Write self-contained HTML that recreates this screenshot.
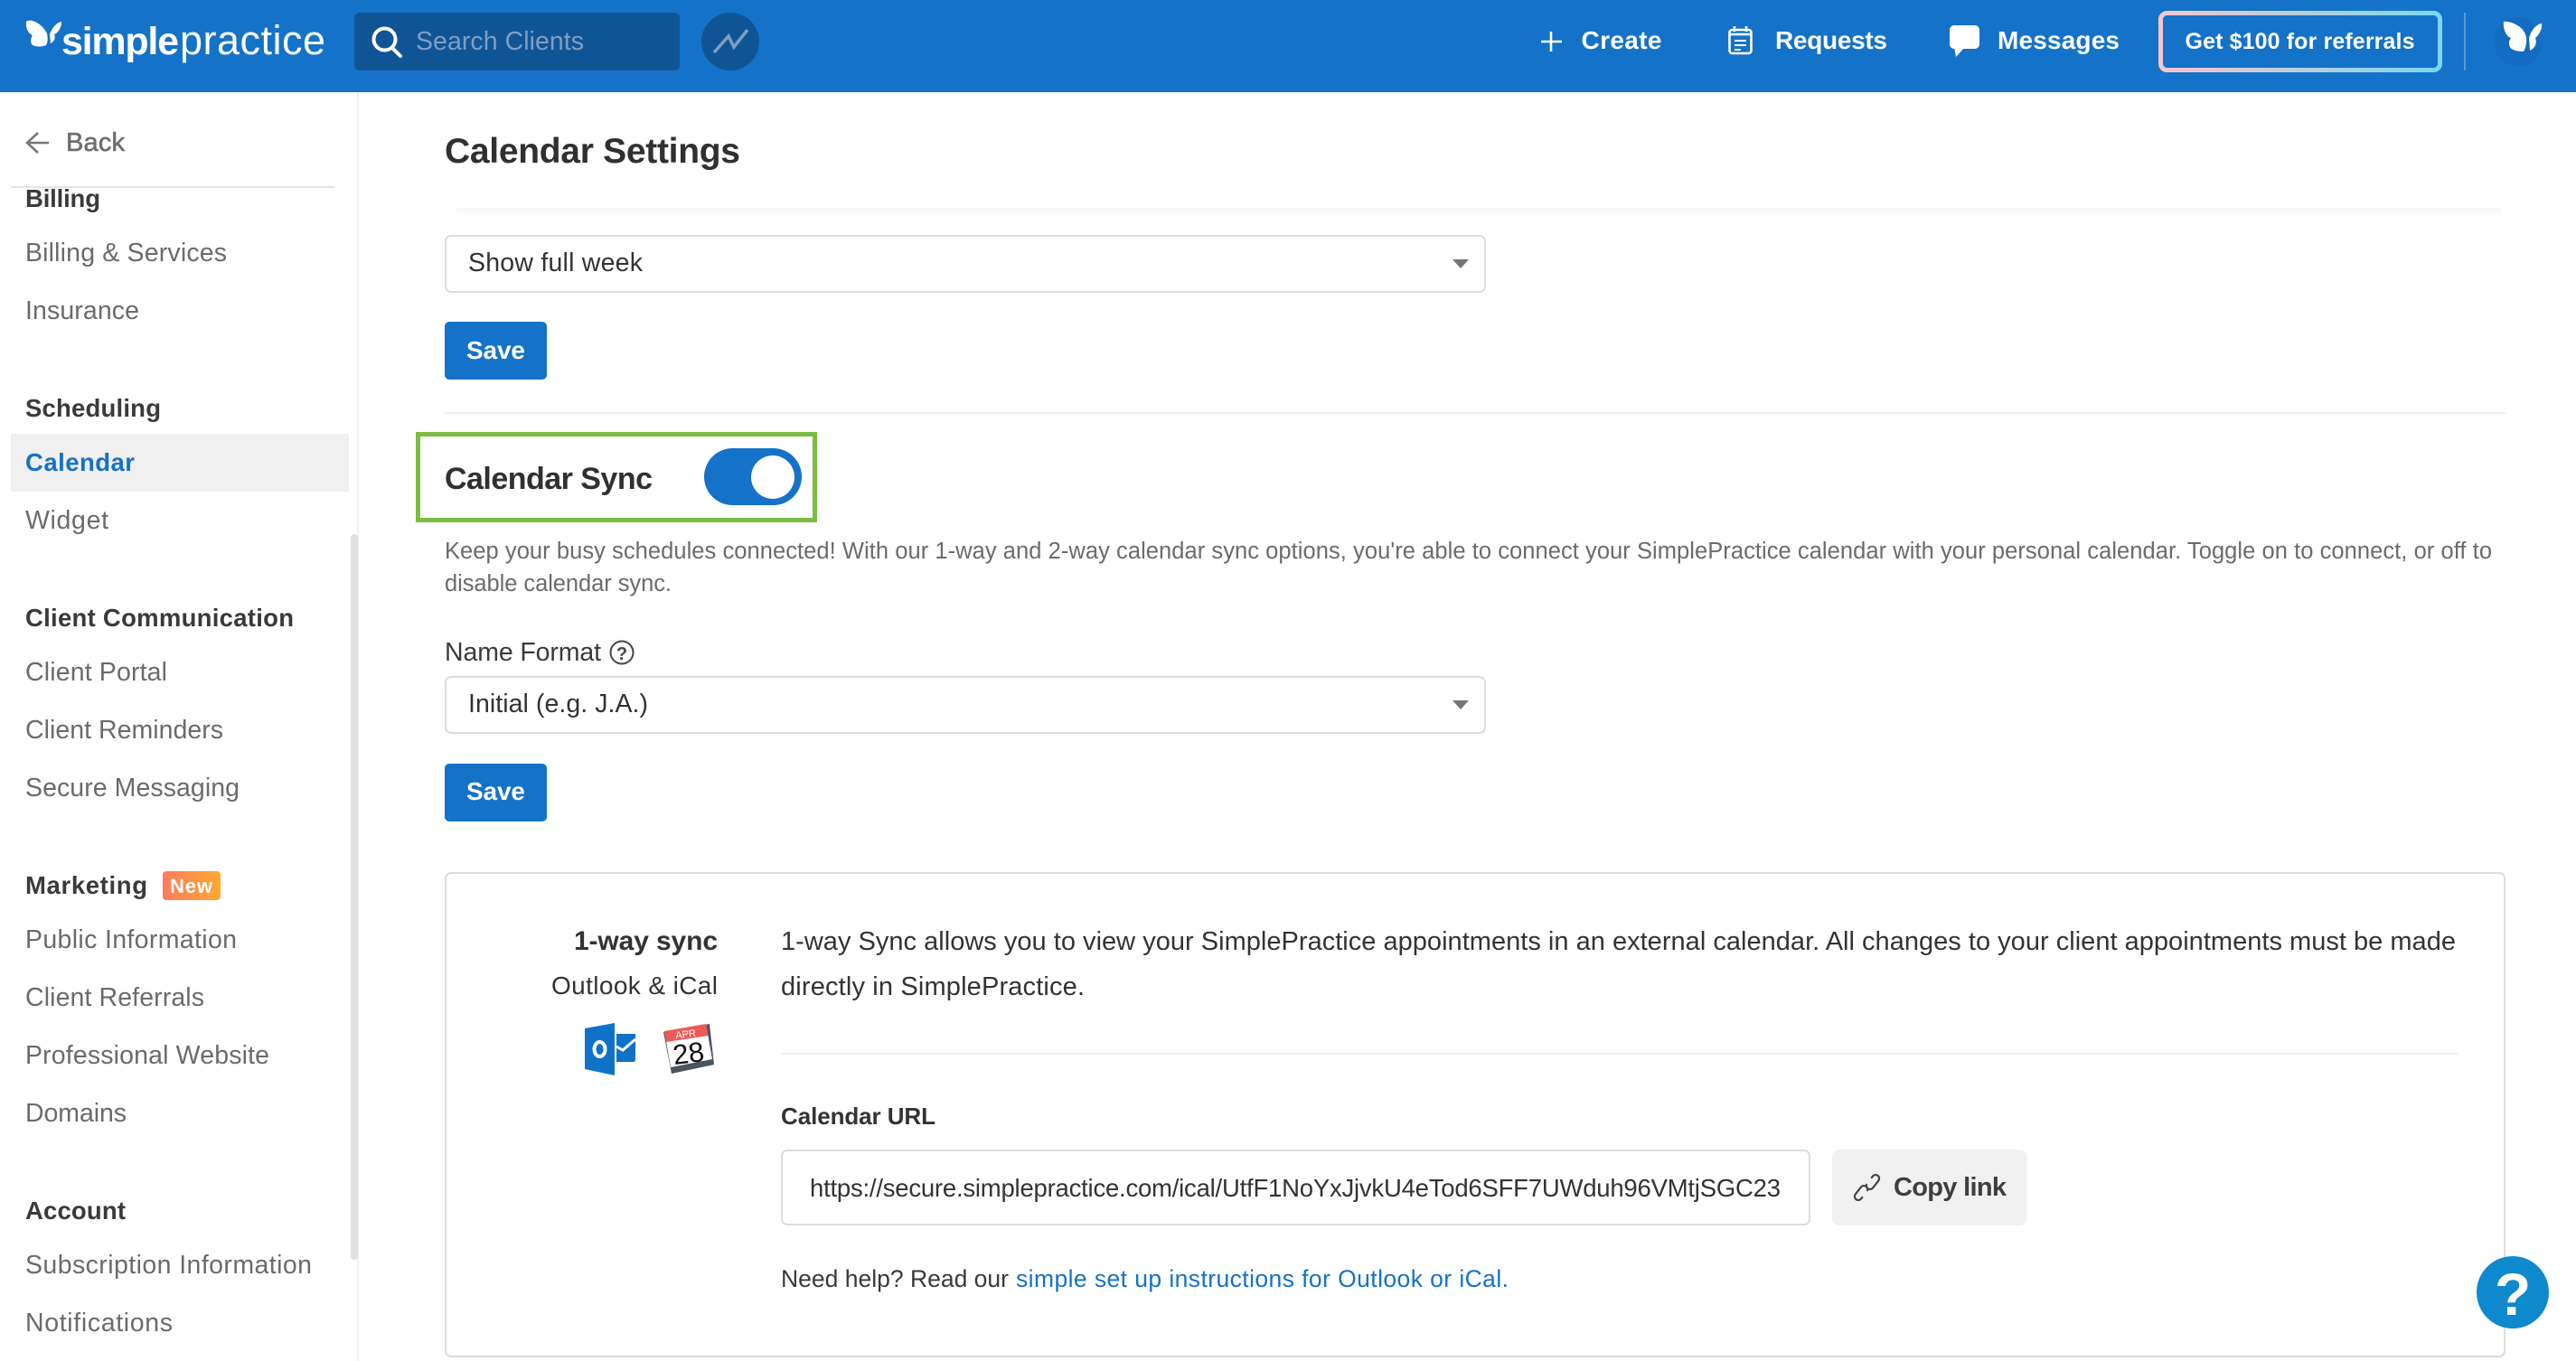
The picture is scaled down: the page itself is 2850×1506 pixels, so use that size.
<!DOCTYPE html>
<html lang="en"><head><meta charset="utf-8"><title>Calendar Settings</title>
<style>
html,body{margin:0;padding:0;background:#fff;width:2850px;height:1506px;overflow:hidden}
svg{display:block}
text{font-family:"Liberation Sans",sans-serif;white-space:pre}
.nav{font-size:28.500px;fill:#6b6b6b}
.hd{font-size:27.500px;font-weight:700;fill:#3a3a3a}
.wt{font-weight:700;fill:#fff}
</style></head><body>
<svg width="2850" height="1506" viewBox="0 0 2850 1506" xmlns="http://www.w3.org/2000/svg">
<defs>
<linearGradient id="ref" x1="0" x2="1" y1="0" y2="0"><stop offset="0" stop-color="#F9C6CB"/><stop offset="1" stop-color="#7AD7F0"/></linearGradient>
<linearGradient id="nw" x1="0" x2="1" y1="0" y2="0"><stop offset="0" stop-color="#FF7A5E"/><stop offset="1" stop-color="#FFA832"/></linearGradient>
<linearGradient id="sh" x1="0" x2="0" y1="0" y2="1"><stop offset="0" stop-color="#f6f6f6"/><stop offset="1" stop-color="#fff"/></linearGradient>
</defs>

<!-- header -->
<rect x="0" y="0" width="2850" height="102" fill="#1472C9"/>
<path d="M29 24C33 20 46 25 52 37C53 42 53 47 51 50C47 52 40 52 36 50C33 47 34 42 36 39C31 37 28 30 29 24Z M68 24C62 25 57 32 55 38L56 48C60 46 62 42 60 38C65 36 68 30 68 24Z" fill="#fff"/>
<text x="68" y="60" font-size="43" font-weight="700" fill="#fff" textLength="130">simple</text>
<text x="199" y="60" font-size="45" fill="#fff" textLength="161">practice</text>
<rect x="392" y="14" width="360" height="64" rx="6" fill="#0F5596"/>
<circle cx="425.500" cy="43.500" r="12" fill="none" stroke="#fff" stroke-width="4"/>
<path d="M434 53L443 62" stroke="#fff" stroke-width="4" stroke-linecap="round"/>
<text x="460" y="55" font-size="28.500" fill="#7F9EC3" textLength="186">Search Clients</text>
<circle cx="808" cy="46" r="32" fill="#0F5596"/>
<path d="M790 58L806 40L812 52L827 33" fill="none" stroke="#7F9EC3" stroke-width="3.500"/>

<path d="M1716 35V57M1705 46H1728" stroke="#fff" stroke-width="2.600"/>
<text x="1749.500" y="54" class="wt" font-size="28" textLength="89">Create</text>
<rect x="1913.500" y="33" width="24" height="26" rx="3" fill="none" stroke="#fff" stroke-width="2.600"/>
<path d="M1919 29V35M1932 29V35M1914 38H1937" stroke="#fff" stroke-width="2.600"/>
<path d="M1919 45H1932M1919 50H1932M1919 55H1926" stroke="#fff" stroke-width="2"/>
<text x="1964" y="54" class="wt" font-size="28" textLength="124">Requests</text>
<rect x="2157" y="28" width="33" height="26" rx="5" fill="#fff"/>
<path d="M2162 52H2174L2164 63Z" fill="#fff"/>
<text x="2210" y="54" class="wt" font-size="28" textLength="135">Messages</text>
<rect x="2390.500" y="14.500" width="309" height="63" rx="7" fill="#1472C9" stroke="url(#ref)" stroke-width="5"/>
<text x="2417.500" y="54" class="wt" font-size="25" textLength="254">Get $100 for referrals</text>
<rect x="2726" y="14" width="2" height="64" fill="#5b9ad8"/>
<ellipse cx="2786" cy="46" rx="27" ry="27" fill="#136CC1"/>
<path transform="translate(2768 24)" d="M2 0C7-1 24 3 27 17C27.500 22 27 28 24 33C19 33 11 32 9 28C7 24 8 21 10 18C4 16 1 6 2 0Z M44 2C37 3 32 11 30 18L31 32C37 29 39 24 37 18C41 15 45 8 44 2Z" fill="#fff"/>

<!-- sidebar -->
<rect x="395" y="102" width="2" height="1404" fill="#F1F1F1"/>
<rect x="388" y="591" width="8" height="803" rx="4" fill="#DDE1E3"/>
<path d="M54 158H31M42 147L30 158L42 169" fill="none" stroke="#777" stroke-width="2.600"/>
<text x="73" y="167" font-size="29" fill="#6f6f6f" stroke="#6f6f6f" stroke-width=".6" textLength="65">Back</text>
<rect x="12" y="206" width="358" height="2" fill="#E4E4E4"/>
<text x="28" y="229" class="hd" textLength="83">Billing</text>
<text x="28" y="289" class="nav" textLength="223">Billing &amp; Services</text>
<text x="28" y="353" class="nav" textLength="126">Insurance</text>
<text x="28" y="461" class="hd" textLength="150">Scheduling</text>
<rect x="12" y="480" width="374" height="64" rx="2" fill="#F0F0F0"/>
<text x="28" y="521" font-size="27.500" font-weight="700" fill="#1472C9" textLength="121">Calendar</text>
<text x="28" y="585" class="nav" textLength="92">Widget</text>
<text x="28" y="693" class="hd" textLength="297">Client Communication</text>
<text x="28" y="753" class="nav" textLength="157">Client Portal</text>
<text x="28" y="817" class="nav" textLength="219">Client Reminders</text>
<text x="28" y="881" class="nav" textLength="237">Secure Messaging</text>
<text x="28" y="989" class="hd" textLength="135">Marketing</text>
<rect x="180" y="964" width="64" height="32" rx="4" fill="url(#nw)"/>
<text x="188" y="988" class="wt" font-size="22" textLength="47">New</text>
<text x="28" y="1049" class="nav" textLength="234">Public Information</text>
<text x="28" y="1113" class="nav" textLength="198">Client Referrals</text>
<text x="28" y="1177" class="nav" textLength="270">Professional Website</text>
<text x="28" y="1241" class="nav" textLength="112">Domains</text>
<text x="28" y="1349" class="hd" textLength="111">Account</text>
<text x="28" y="1409" class="nav" textLength="317">Subscription Information</text>
<text x="28" y="1473" class="nav" textLength="163">Notifications</text>

<!-- main -->
<text x="492" y="180" font-size="39" font-weight="700" fill="#303030" textLength="327">Calendar Settings</text>
<rect x="505" y="230" width="2262" height="10" fill="url(#sh)"/>

<rect x="493" y="261" width="1150" height="62" rx="6" fill="#fff" stroke="#DDD" stroke-width="2"/>
<text x="518" y="300" font-size="28.500" fill="#333" textLength="193">Show full week</text>
<path d="M1607 287H1625L1616 297Z" fill="#757575"/>
<rect x="492" y="356" width="113" height="64" rx="5" fill="#1472C9"/>
<text x="516" y="397" class="wt" font-size="28" textLength="65">Save</text>
<rect x="492" y="456" width="2280" height="2" fill="#F0F0F0"/>

<rect x="462.500" y="480.500" width="439" height="95" fill="none" stroke="#7BBD42" stroke-width="5"/>
<text x="492" y="541" font-size="34" font-weight="700" fill="#303030" textLength="230">Calendar Sync</text>
<rect x="779" y="496" width="108" height="63" rx="31.500" fill="#1472C9"/>
<circle cx="855" cy="528" r="24" fill="#fff"/>
<text x="492" y="618" font-size="25.500" fill="#6b6b6b" textLength="2265">Keep your busy schedules connected! With our 1-way and 2-way calendar sync options, you're able to connect your SimplePractice calendar with your personal calendar. Toggle on to connect, or off to</text>
<text x="492" y="654" font-size="25.500" fill="#6b6b6b" textLength="251">disable calendar sync.</text>

<text x="492" y="731" font-size="28.500" fill="#3a3a3a" textLength="173">Name Format</text>
<circle cx="688" cy="722" r="12.500" fill="none" stroke="#444" stroke-width="2"/>
<text x="688" y="730" font-size="20" font-weight="700" fill="#444" text-anchor="middle">?</text>
<rect x="493" y="749" width="1150" height="62" rx="6" fill="#fff" stroke="#DDD" stroke-width="2"/>
<text x="518" y="788" font-size="28.500" fill="#333" textLength="199">Initial (e.g. J.A.)</text>
<path d="M1607 775H1625L1616 785Z" fill="#757575"/>
<rect x="492" y="845" width="113" height="64" rx="5" fill="#1472C9"/>
<text x="516" y="885" class="wt" font-size="28" textLength="65">Save</text>

<!-- card -->
<rect x="493" y="966" width="2278" height="535" rx="6" fill="#fff" stroke="#DDD" stroke-width="2"/>
<text x="635" y="1051" font-size="30" font-weight="700" fill="#333" textLength="159">1-way sync</text>
<text x="610" y="1100" font-size="28" fill="#333" textLength="184">Outlook &amp; iCal</text>
<!-- outlook -->
<path d="M647 1138L680 1132V1190L647 1183Z" fill="#0F72C8"/>
<ellipse cx="663.500" cy="1161" rx="6" ry="8" fill="none" stroke="#fff" stroke-width="4"/>
<path d="M682 1144H703V1172Q703 1175 700 1175H682Z" fill="#0F72C8"/>
<path d="M682 1158L689 1162L703 1150" fill="none" stroke="#fff" stroke-width="3"/>
<!-- ical -->
<path d="M734 1142L785 1133L790 1178L743 1188Z" fill="#4a5560"/>
<path d="M735 1141L781 1133L788 1172L742 1181Z" fill="#fff"/>
<path d="M735 1141L781 1133L783.500 1146L737 1153Z" fill="#EE5A57"/>
<text x="759" y="1148" font-size="11" fill="#fff" text-anchor="middle" transform="rotate(-7 759 1148)">APR</text>
<text x="763" y="1176" font-size="31" fill="#111" text-anchor="middle" transform="rotate(-7 763 1176)">28</text>

<text x="864" y="1051" font-size="29" fill="#333" textLength="1853">1-way Sync allows you to view your SimplePractice appointments in an external calendar. All changes to your client appointments must be made</text>
<text x="864" y="1101" font-size="29" fill="#333" textLength="336">directly in SimplePractice.</text>
<rect x="864" y="1165" width="1855" height="2" fill="#F0F0F0"/>
<text x="864" y="1244" font-size="26" font-weight="700" fill="#333" textLength="171">Calendar URL</text>
<rect x="865" y="1273" width="1137" height="82" rx="6" fill="#fff" stroke="#DDD" stroke-width="2"/>
<text x="896" y="1324" font-size="27.500" fill="#333" textLength="1074">https://secure.simplepractice.com/ical/UtfF1NoYxJjvkU4eTod6SFF7UWduh96VMtjSGC23</text>
<rect x="2027" y="1272" width="215.500" height="84" rx="8" fill="#F1F1F1"/>
<g fill="none" stroke="#444" stroke-width="2.200">
<rect x="-4" y="-9" width="8" height="18" rx="4" transform="translate(2072 1308) rotate(38)" stroke-dasharray="28 8"/>
<rect x="-4" y="-9" width="8" height="18" rx="4" transform="translate(2059 1320) rotate(218)" stroke-dasharray="28 8"/>
</g>
<text x="2095" y="1323" font-size="29" font-weight="700" fill="#3f3f3f" textLength="125">Copy link</text>
<text x="864" y="1424" font-size="26.500" fill="#3a3a3a" textLength="252">Need help? Read our</text>
<text x="1124" y="1424" font-size="26.500" fill="#1472C9" textLength="545">simple set up instructions for Outlook or iCal.</text>

<circle cx="2780" cy="1430" r="40" fill="#0E89CE"/>
<text x="2780" y="1455" font-size="66" font-weight="700" fill="#fff" text-anchor="middle">?</text>
</svg>
</body></html>
